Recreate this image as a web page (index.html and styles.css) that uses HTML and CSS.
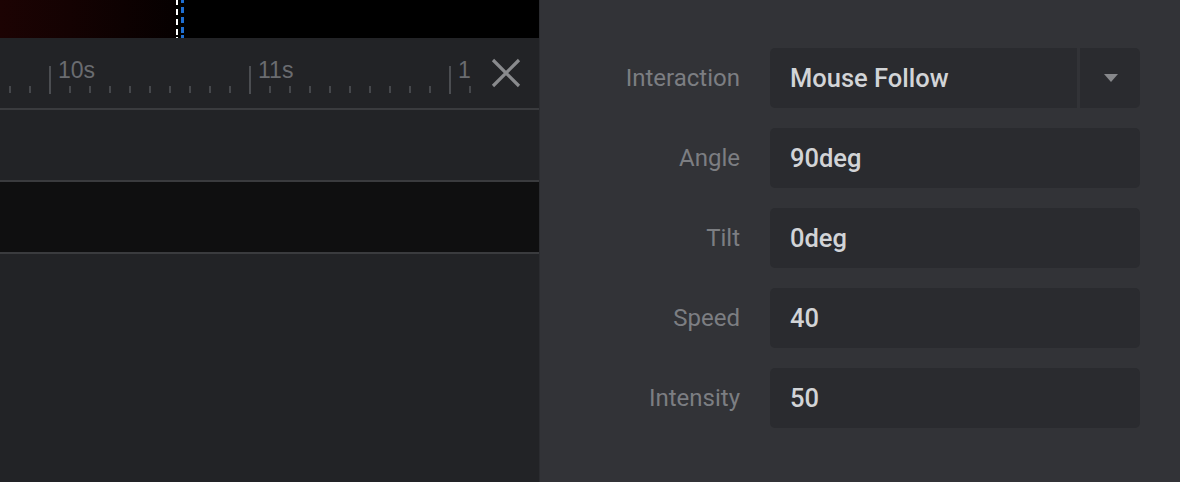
FILE: index.html
```html
<!DOCTYPE html>
<html>
<head>
<meta charset="utf-8">
<link rel="stylesheet" href="styles.css">
</head>
<body>
<div class="app">
  <section class="timeline">
    <div class="preview">
      <div class="glow"></div>
      <div class="marker marker-white"></div>
      <div class="marker marker-blue"></div>
    </div>
    <div class="ruler-row">
      <div class="ruler">
        <div class="ticks"></div>
        <span class="tlabel t10">10s</span>
        <span class="tlabel t11">11s</span>
        <span class="tlabel t12">1</span>
      </div>
      <button class="close" aria-label="Close">
        <svg width="30" height="30" viewBox="0 0 30 30"><path d="M2 2 L28 28 M28 2 L2 28" stroke="#898a8d" stroke-width="3.2" fill="none"/></svg>
      </button>
    </div>
    <div class="track"></div>
    <div class="track track-dark"></div>
    <div class="track-rest"></div>
  </section>
  <section class="props">
    <div class="field">
      <label class="flabel">Interaction</label>
      <div class="select">
        <div class="box select-value">Mouse Follow</div>
        <div class="box select-arrow"><svg width="16" height="10" viewBox="0 0 16 10"><path d="M1 1 H15 L8 9 Z" fill="#87888b"/></svg></div>
      </div>
    </div>
    <div class="field">
      <label class="flabel">Angle</label>
      <div class="box">90deg</div>
    </div>
    <div class="field">
      <label class="flabel">Tilt</label>
      <div class="box">0deg</div>
    </div>
    <div class="field">
      <label class="flabel">Speed</label>
      <div class="box">40</div>
    </div>
    <div class="field">
      <label class="flabel">Intensity</label>
      <div class="box">50</div>
    </div>
  </section>
</div>
</body>
</html>
```
FILE: styles.css
```css
* { box-sizing: border-box; }
html, body { margin: 0; padding: 0; }
body {
  width: 1180px;
  height: 482px;
  overflow: hidden;
  background: #323337;
  font-family: Roboto, "Liberation Sans", sans-serif;
}
.app {
  display: flex;
  height: 482px;
}
.timeline {
  width: 540px;
  flex: none;
  display: flex;
  flex-direction: column;
  background: #222326;
  border-right: 1px solid #2b2c30;
}
.preview {
  height: 38px;
  flex: none;
  position: relative;
  background: #000;
}
.glow {
  width: 176px;
  height: 100%;
  background: linear-gradient(90deg, #1c0303 0%, #140202 40%, #060000 100%);
}
.marker {
  position: absolute;
  top: 0;
  bottom: 0;
}
.marker-white {
  left: 176px;
  width: 2px;
  background: repeating-linear-gradient(180deg, #ffffff 0 6px, transparent 6px 10px);
  background-position: 0 -1px;
}
.marker-blue {
  left: 181px;
  width: 3px;
  background: repeating-linear-gradient(180deg, #1f6fd1 0 6px, transparent 6px 10px);
  background-position: 0 -3px;
}
.ruler-row {
  height: 72px;
  flex: none;
  display: flex;
  border-bottom: 2px solid #3a3b3e;
}
.ruler {
  width: 471px;
  flex: none;
  position: relative;
  overflow: hidden;
}
.ticks {
  position: absolute;
  left: 0;
  right: 0;
  top: 0;
  bottom: 0;
  background:
    repeating-linear-gradient(90deg, transparent 0 49px, #4b4d51 49px 51px, transparent 51px 200px) 0 28px / 100% 28px no-repeat,
    repeating-linear-gradient(90deg, transparent 0 9px, #45474b 9px 11px, transparent 11px 20px) 0 48px / 100% 7px no-repeat;
}
.tlabel {
  position: absolute;
  top: 19px;
  font-family: "Liberation Sans", Arial, sans-serif;
  font-size: 23px;
  line-height: 26px;
  color: #6a6c70;
}
.t10 { left: 58px; }
.t11 { left: 258px; }
.t12 { left: 458px; }
.close {
  flex: 1;
  background: none;
  border: 0;
  padding: 0 0 0 1px;
  display: flex;
  align-items: center;
  justify-content: center;
}
.close svg { display: block; }
.track {
  height: 72px;
  flex: none;
  border-bottom: 2px solid #3a3b3e;
}
.track-dark {
  background: #0f0f10;
}
.track-rest { flex: 1; }

.props {
  flex: 1;
  padding: 48px 40px 0 0;
  display: flex;
  flex-direction: column;
  gap: 20px;
}
.field {
  display: grid;
  grid-template-columns: 200px 370px;
  column-gap: 30px;
  align-items: center;
  height: 60px;
}
.flabel {
  text-align: right;
  font-size: 24px;
  color: #7c7e82;
}
.box {
  height: 60px;
  background: #2a2b2f;
  border-radius: 5px;
  display: flex;
  align-items: center;
  padding-left: 20px;
  font-size: 25.5px;
  font-weight: 500;
  color: #d2d4d7;
}
.select {
  display: flex;
  gap: 3px;
}
.select-value {
  flex: 1;
  border-radius: 5px 0 0 5px;
}
.select-arrow {
  width: 60px;
  flex: none;
  padding: 0;
  justify-content: center;
  border-radius: 0 5px 5px 0;
}
.select-arrow svg { display: block; margin-left: 1px; }
```
